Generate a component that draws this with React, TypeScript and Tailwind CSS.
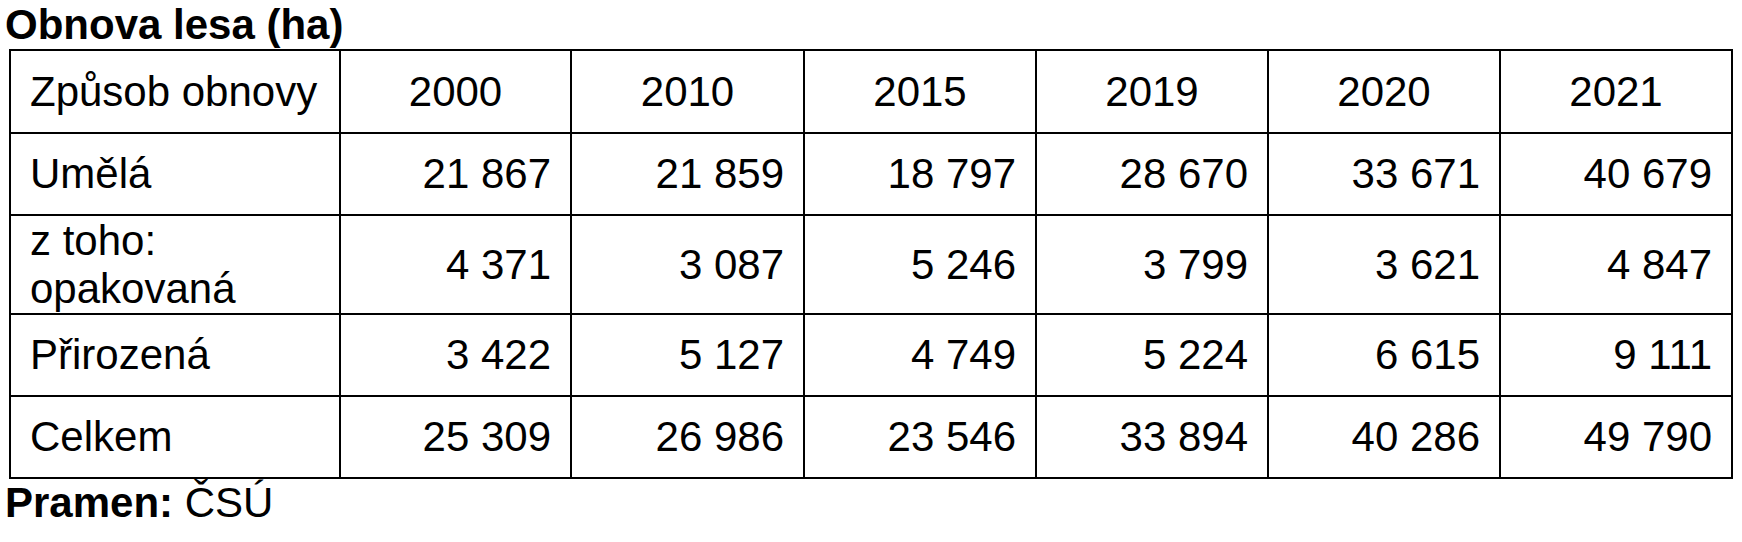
const years = ["2000", "2010", "2015", "2019", "2020", "2021"];

const rows: { label: React.ReactNode; values: string[] }[] = [
  { label: "Umělá", values: ["21 867", "21 859", "18 797", "28 670", "33 671", "40 679"] },
  {
    label: (
      <>
        z toho:
        <br />
        opakovaná
      </>
    ),
    values: ["4 371", "3 087", "5 246", "3 799", "3 621", "4 847"],
  },
  { label: "Přirozená", values: ["3 422", "5 127", "4 749", "5 224", "6 615", "9 111"] },
  { label: "Celkem", values: ["25 309", "26 986", "23 546", "33 894", "40 286", "49 790"] },
];

export default function App() {
  return (
    <div className="min-h-screen w-[1742px] h-[542px] bg-white pl-[5px] text-black font-['Liberation_Sans',Arial,sans-serif] text-[42px]">
      <h1 className="font-bold leading-[49px]">Obnova lesa (ha)</h1>

      <div className="ml-[4px] grid w-max grid-cols-[330px_231px_233px_232px_232px_232px_232px] grid-rows-[83px_82px_99px_82px_82px] border-l-2 border-t-2 border-black leading-[1.13]">
        <div className="flex items-center border-b-2 border-r-2 border-black pl-[19px]">Způsob obnovy</div>
        {years.map((y) => (
          <div key={y} className="flex items-center justify-center border-b-2 border-r-2 border-black">
            {y}
          </div>
        ))}

        {rows.map((row, i) => (
          <div key={i} className="contents">
            <div className="flex items-center border-b-2 border-r-2 border-black pl-[19px]">
              <span>{row.label}</span>
            </div>
            {row.values.map((v, j) => (
              <div key={j} className="flex items-center justify-end border-b-2 border-r-2 border-black pr-[19px]">
                {v}
              </div>
            ))}
          </div>
        ))}
      </div>

      <p className="leading-[47px]">
        <span className="font-bold">Pramen:</span> ČSÚ
      </p>
    </div>
  );
}
